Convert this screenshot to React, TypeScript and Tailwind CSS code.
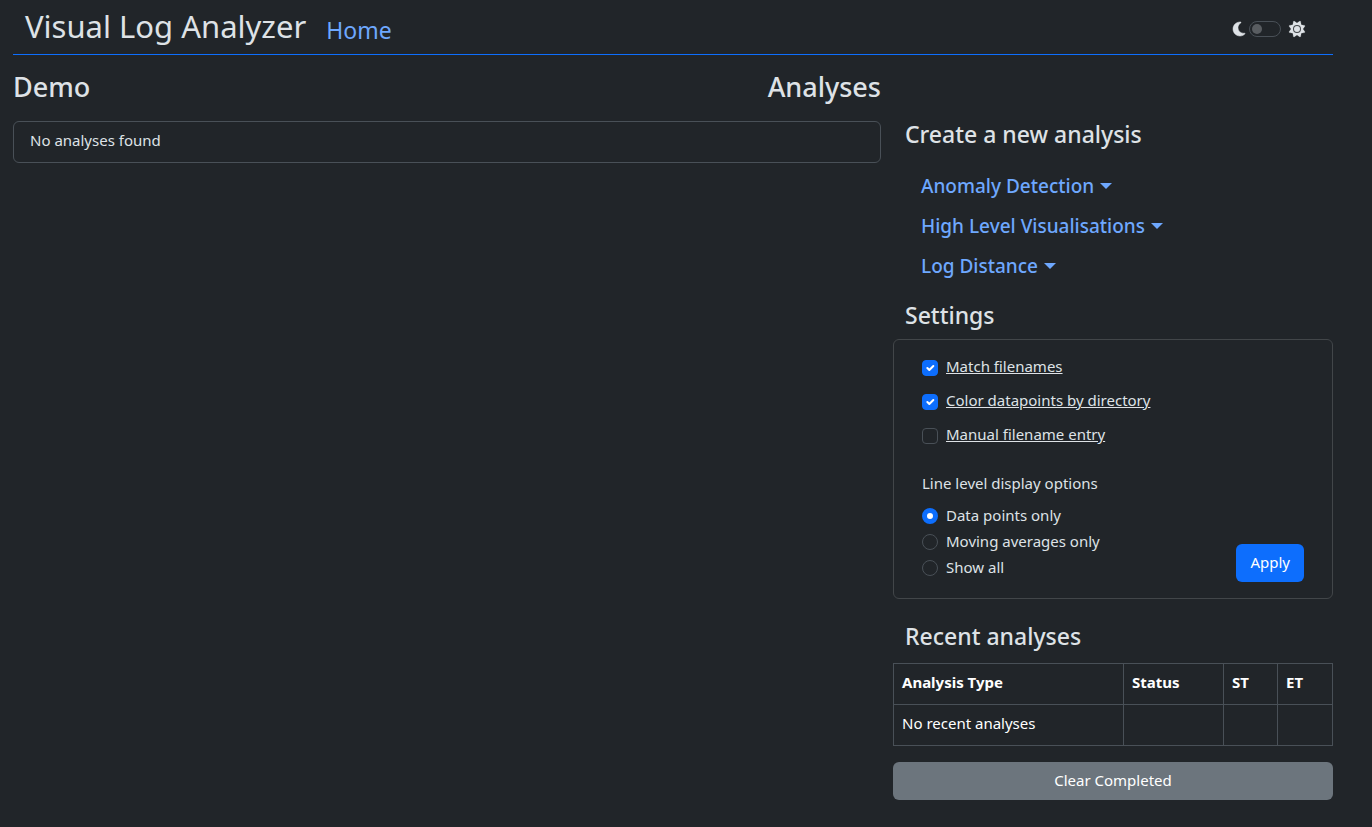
import { useState } from "react";
import { FaMoon, FaSun } from "react-icons/fa6";

function Caret() {
  return (
    <svg className="ml-[6px] h-[6px] w-3" viewBox="0 0 12 6" fill="currentColor" aria-hidden="true">
      <path d="M0 0h12L6 6z" />
    </svg>
  );
}

function SectionTitle({ children }: { children: string }) {
  return <h3 className="px-3 text-[23px] leading-[29px] font-medium">{children}</h3>;
}

function CheckRow({ id, label, initial }: { id: string; label: string; initial: boolean }) {
  const [checked, setChecked] = useState(initial);
  return (
    <div className="flex h-6 items-start gap-2">
      <span className="relative mt-1 flex size-4">
        <input
          id={id}
          type="checkbox"
          checked={checked}
          onChange={(e) => setChecked(e.target.checked)}
          className="size-4 appearance-none rounded border border-[#495057] checked:border-[#0d6efd] checked:bg-[#0d6efd]"
        />
        {checked && (
          <svg className="pointer-events-none absolute inset-0 size-4" viewBox="-2 -2 24 24" fill="none" aria-hidden="true">
            <path d="m6 10 3 3 6-6" stroke="#fff" strokeWidth="3" strokeLinecap="round" strokeLinejoin="round" />
          </svg>
        )}
      </span>
      <label htmlFor={id} className="leading-5 underline">
        {label}
      </label>
    </div>
  );
}

const displayOptions = ["Data points only", "Moving averages only", "Show all"];
const analysisMenus = ["Anomaly Detection", "High Level Visualisations", "Log Distance"];

export default function App() {
  const [display, setDisplay] = useState(displayOptions[0]);
  return (
    <div className="min-h-screen bg-[#212529] pr-[39px] pl-[13px] font-['Noto_Sans',sans-serif] text-[15px] leading-6 text-[#dee2e6]">
      <header className="flex h-[55px] items-center justify-between border-b border-[#0d6efd] pr-7 pl-3">
        <div className="flex items-center gap-5 pb-[2px]">
          <h1 className="text-[31px] leading-[38px]">Visual Log Analyzer</h1>
          <a href="#" className="pt-2 text-[23px] leading-[30px] text-[#6ea8fe]">
            Home
          </a>
        </div>
        <div className="flex items-center pt-1">
          <FaMoon className="h-4 w-3 overflow-visible stroke-[16px]" />
          <input
            type="checkbox"
            role="switch"
            aria-label="Light theme"
            className="mr-2 ml-1 flex h-4 w-8 appearance-none items-center rounded-full border border-[#495057] px-[2px] before:size-[10px] before:rounded-full before:bg-[#595d61] checked:justify-end"
          />
          <FaSun className="size-4 overflow-visible stroke-[6px]" />
        </div>
      </header>

      <div className="grid grid-cols-[2fr_1fr]">
        <main className="pt-[15px] pr-3">
          <div className="flex justify-between text-[27px] leading-[34px] font-medium">
            <h2>Demo</h2>
            <h2>Analyses</h2>
          </div>
          <div className="mt-[17px] rounded-md border border-[#495057] px-4 pt-[6px] pb-[10px]">No analyses found</div>
        </main>

        <aside className="pt-[65px]">
          <SectionTitle>Create a new analysis</SectionTitle>
          <nav className="mt-[17px] flex flex-col items-start px-7">
            {analysisMenus.map((name) => (
              <button key={name} type="button" className="flex h-10 items-center text-[19px] font-medium text-[#6ea8fe]">
                {name}
                <Caret />
              </button>
            ))}
          </nav>

          <div className="mt-[15px]">
            <SectionTitle>Settings</SectionTitle>
          </div>
          <form
            className="mt-[9px] flex items-end justify-between rounded-md border border-[#424649] px-7 py-4"
            onSubmit={(e) => e.preventDefault()}
          >
            <div>
              <div className="flex flex-col gap-[10px]">
                <CheckRow id="match" label="Match filenames" initial={true} />
                <CheckRow id="color" label="Color datapoints by directory" initial={true} />
                <CheckRow id="manual" label="Manual filename entry" initial={false} />
              </div>
              <fieldset className="mt-[23px] pb-px">
                <legend className="mb-2">Line level display options</legend>
                {displayOptions.map((option) => (
                  <label key={option} className="flex h-[26px] items-center gap-2">
                    <input
                      type="radio"
                      name="display"
                      checked={display === option}
                      onChange={() => setDisplay(option)}
                      className="size-4 appearance-none rounded-full border border-[#495057] checked:border-5 checked:border-[#0d6efd] checked:bg-white"
                    />
                    <span className="pb-[2px]">{option}</span>
                  </label>
                ))}
              </fieldset>
            </div>
            <button type="submit" className="h-[38px] rounded-md bg-[#0d6efd] px-[14px] pb-[2px] text-white">
              Apply
            </button>
          </form>

          <div className="mt-[23px]">
            <SectionTitle>Recent analyses</SectionTitle>
          </div>
          <table className="mt-3 w-full table-fixed border-collapse text-left text-white">
            <colgroup>
              <col />
              <col className="w-[100px]" />
              <col className="w-[54px]" />
              <col className="w-[55px]" />
            </colgroup>
            <thead>
              <tr>
                {["Analysis Type", "Status", "ST", "ET"].map((head) => (
                  <th key={head} className="border border-[#495057] px-2 pt-[6px] pb-[10px] font-bold">
                    {head}
                  </th>
                ))}
              </tr>
            </thead>
            <tbody>
              <tr>
                <td className="border border-[#495057] px-2 pt-[6px] pb-[10px]">No recent analyses</td>
                <td className="border border-[#495057]" />
                <td className="border border-[#495057]" />
                <td className="border border-[#495057]" />
              </tr>
            </tbody>
          </table>
          <button type="button" className="mt-4 h-[38px] w-full rounded-md bg-[#6c757d] pb-[2px] text-white">
            Clear Completed
          </button>
        </aside>
      </div>
    </div>
  );
}
